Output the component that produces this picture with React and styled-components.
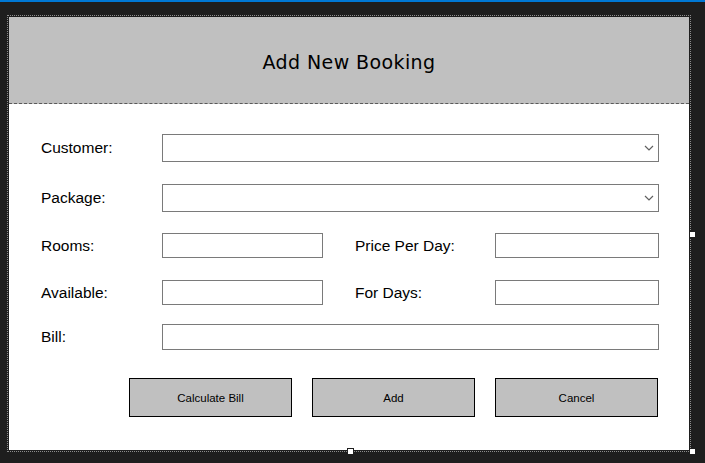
import React from "react";
import styled, { createGlobalStyle } from "styled-components";

const GlobalStyle = createGlobalStyle`
  html, body {
    margin: 0;
    padding: 0;
    background: #1e1e1e;
  }
  body {
    width: 705px;
    height: 463px;
    overflow: hidden;
    font-family: "Liberation Sans", Arial, sans-serif;
  }
`;

const TopBar = styled.div`
  height: 2px;
  background: #0078d4;
`;

const Stage = styled.div`
  padding: 13px 0 0 7px;
`;

const Frame = styled.div`
  position: relative;
  width: 680px;
  border: 1px dotted #8c8c8c;
  padding: 1px;
`;

const Handle = styled.span`
  position: absolute;
  width: 5px;
  height: 5px;
  background: #ffffff;
  border: 1px solid #1e1e1e;
  left: ${(p) => p.left};
  top: ${(p) => p.top};
`;

const Form = styled.div`
  height: 433px;
  background: #ffffff;
  display: flex;
  flex-direction: column;
`;

const Header = styled.div`
  height: 86px;
  background: #c0c0c0;
  border-bottom: 1px dashed #5a5a5a;
  display: flex;
  align-items: center;
  justify-content: center;
`;

const Title = styled.h1`
  margin: 4px 0 0 0;
  font-family: "Comic Sans MS", "DejaVu Sans", sans-serif;
  font-weight: normal;
  font-size: 19px;
  letter-spacing: 0.4px;
  color: #000000;
`;

const Body = styled.div`
  padding: 30px 30px 0 32px;
  display: flex;
  flex-direction: column;
`;

const Row = styled.div`
  display: flex;
  align-items: center;
  margin-top: ${(p) => p.gap || 0}px;
`;

const Label = styled.label`
  width: ${(p) => p.width || 121}px;
  flex-shrink: 0;
  font-size: 15.5px;
  color: #000000;
`;

const Field = styled.div`
  box-sizing: border-box;
  width: ${(p) => (p.width ? `${p.width}px` : "auto")};
  flex: ${(p) => (p.width ? "0 0 auto" : "1")};
  height: ${(p) => p.height || 25}px;
  border: 1px solid #7a7a7a;
  background: #ffffff;
  display: flex;
  align-items: center;
  justify-content: flex-end;
  padding-right: 4px;
`;

const Spacer = styled.div`
  width: ${(p) => p.width}px;
  flex-shrink: 0;
`;

const Buttons = styled.div`
  display: flex;
  justify-content: flex-end;
  gap: 20px;
  margin-top: 28px;
  padding-right: 1px;
`;

const Button = styled.button`
  box-sizing: border-box;
  width: 163px;
  height: 39px;
  background: #c0c0c0;
  border: 1px solid #000000;
  font-family: "Liberation Sans", Arial, sans-serif;
  font-size: 11.5px;
  color: #000000;
  padding: 0;
`;

function Chevron() {
  return (
    <svg width="10" height="6" viewBox="0 0 10 6">
      <polyline points="1,1 5,5 9,1" fill="none" stroke="#606060" strokeWidth="1.2" />
    </svg>
  );
}

export default function App() {
  return (
    <>
      <GlobalStyle />
      <TopBar />
      <Stage>
        <Frame>
          <Form>
            <Header>
              <Title>Add New Booking</Title>
            </Header>
            <Body>
              <Row>
                <Label>Customer:</Label>
                <Field height={28}>
                  <Chevron />
                </Field>
              </Row>
              <Row gap={22}>
                <Label>Package:</Label>
                <Field height={28}>
                  <Chevron />
                </Field>
              </Row>
              <Row gap={21}>
                <Label>Rooms:</Label>
                <Field width={161} />
                <Spacer width={32} />
                <Label width={140}>Price Per Day:</Label>
                <Field width={164} />
              </Row>
              <Row gap={22}>
                <Label>Available:</Label>
                <Field width={161} />
                <Spacer width={32} />
                <Label width={140}>For Days:</Label>
                <Field width={164} />
              </Row>
              <Row gap={19}>
                <Label>Bill:</Label>
                <Field height={26} />
              </Row>
              <Buttons>
                <Button>Calculate Bill</Button>
                <Button>Add</Button>
                <Button>Cancel</Button>
              </Buttons>
            </Body>
          </Form>
          <Handle left="681px" top="215px" />
          <Handle left="339px" top="432px" />
          <Handle left="681px" top="432px" />
        </Frame>
      </Stage>
    </>
  );
}
